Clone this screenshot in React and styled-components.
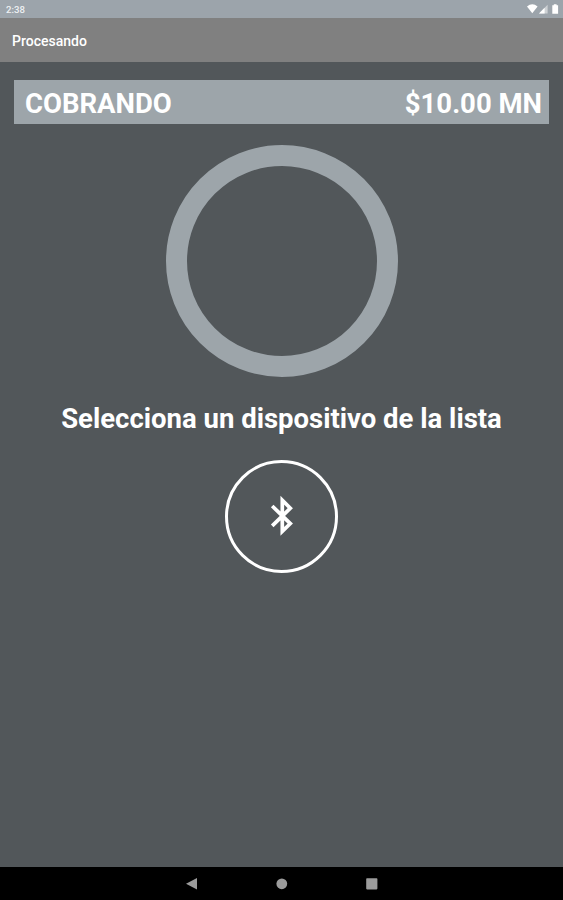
import React from "react";

import styled, { createGlobalStyle } from "styled-components";

const App = () => {
  return (<Screen>
    <GlobalStyle />
    <StatusBar>
      <Clock>2:38</Clock>
      <svg width="34" height="12" viewBox="0 0 34 12" fill="#fff">
        <path d="M0 2.6 Q5.3 -1.9 10.6 2.6 L5.3 9.2 Z" />
        <path d="M12 9.4 L20.6 0.8 V9.4 Z" fillOpacity="0.5" />
        <path d="M12 9.4 L17.6 3.8 V9.4 Z" />
        <path d="M25.3 1.3 h1.5 v-1.1 h2.8 v1.1 h1.5 v8.4 h-5.8 Z" />
      </svg>
    </StatusBar>
    <TitleBar>Procesando</TitleBar>
    <Content>
      <Amount>
        <span>COBRANDO</span>
        <span>$10.00 MN</span>
      </Amount>
      <Ring />
      <Message>Selecciona un dispositivo de la lista</Message>
      <DeviceButton aria-label="Bluetooth">
        <svg width="28" height="44" viewBox="0 0 28 44" fill="none" stroke="#fff" strokeWidth="3.7">
          <path d="M4.2 11 L22.3 28.6 L14.3 36.3 V5.3 L22.3 13.2 L4.2 30.8" />
        </svg>
      </DeviceButton>
    </Content>
    <NavBar>
      <svg width="12" height="12" viewBox="0 0 12 12"><path d="M0 5.8 L11 0 V11.6 Z" /></svg>
      <svg width="12" height="12" viewBox="0 0 12 12"><circle cx="5.8" cy="5.8" r="5.4" /></svg>
      <svg width="12" height="12" viewBox="0 0 12 12"><rect x="0.2" y="0.2" width="11.2" height="11.2" rx="0.8" /></svg>
    </NavBar>
  </Screen>)
}

const GlobalStyle = createGlobalStyle`
body {
margin: 0;
background: #52575a;
}
`;

const Screen = styled.div`
display: flex;
flex-direction: column;
width: 100%;
height: 100vh;
overflow: hidden;
background: #52575a;
color: #fff;
font-family: Roboto, "Liberation Sans", sans-serif;
`;

const StatusBar = styled.div`
display: flex;
flex: none;
justify-content: space-between;
height: 18px;
box-sizing: border-box;
padding: 4px 2px 0 6px;
background: #9ca4ab;
`;

const Clock = styled.span`
font-size: 9.6px;
line-height: 12px;
font-weight: 500;
color: #eef1f3;
`;

const TitleBar = styled.div`
display: flex;
flex: none;
align-items: center;
height: 44px;
box-sizing: border-box;
padding: 1px 0 0 12px;
background: #808080;
font-size: 14px;
font-weight: 500;
`;

const Content = styled.div`
display: flex;
flex: 1;
flex-direction: column;
align-items: center;
padding: 18px 14px 0;
`;

const Amount = styled.div`
display: flex;
align-items: center;
justify-content: space-between;
align-self: stretch;
box-sizing: border-box;
height: 44px;
padding: 3px 7px 0 11px;
background: #9da5aa;
font-size: 27.5px;
font-weight: 700;
`;

const Ring = styled.div`
flex: none;
box-sizing: border-box;
width: 232px;
height: 232px;
margin-top: 21px;
border: 21px solid #9da5aa;
border-radius: 50%;
`;

const Message = styled.div`
margin-top: 26px;
height: 32px;
line-height: 32px;
font-size: 27.5px;
font-weight: 700;
white-space: nowrap;
`;

const DeviceButton = styled.button`
display: flex;
flex: none;
align-items: center;
justify-content: center;
box-sizing: border-box;
width: 113px;
height: 113px;
margin-top: 25px;
padding: 0;
border: 3px solid #fff;
border-radius: 50%;
background: none;
`;

const NavBar = styled.div`
display: flex;
flex: none;
align-items: center;
justify-content: center;
gap: 78px;
height: 33px;
background: #000;
fill: #9c9c9c;
`;

export default App;
